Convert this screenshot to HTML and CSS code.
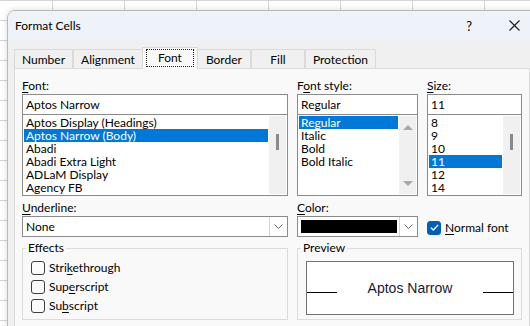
FILE: index.html
```html
<!DOCTYPE html>
<html lang="en">
<head>
    <link rel="stylesheet" href="styles.css">
</head>
<body>
    <div class="sheet">
        <div class="dialog">
            <div class="titlebar">
                <span class="title">Format Cells</span>
                <span class="help">?</span>
                <svg class="close" width="11" height="11" viewBox="0 0 11 11">
                    <path d="M0.5 0.5 L10.5 10.5 M10.5 0.5 L0.5 10.5" stroke="#1a1a1a" stroke-width="1.1" fill="none"/>
                </svg>
            </div>

            <div class="dialog-body">
                <div class="tabs">
                    <div class="tab">Number</div>
                    <div class="tab">Alignment</div>
                    <div class="tab active"><span class="focus">Font</span></div>
                    <div class="tab">Border</div>
                    <div class="tab">Fill</div>
                    <div class="tab">Protection</div>
                </div>

                <div class="page">
                    <div class="form-grid">
                        <!-- row 1 -->
                        <div class="field">
                            <div class="label"><u>F</u>ont:</div>
                            <div class="textbox">Aptos Narrow</div>
                            <div class="listbox">
                                <div class="items">
                                    <div class="item">Aptos Display (Headings)</div>
                                    <div class="item selected">Aptos Narrow (Body)</div>
                                    <div class="item">Abadi</div>
                                    <div class="item">Abadi Extra Light</div>
                                    <div class="item">ADLaM Display</div>
                                    <div class="item">Agency FB</div>
                                </div>
                                <div class="scrollbar"><div class="thumb"></div></div>
                            </div>
                        </div>

                        <div class="field">
                            <div class="label">F<u>o</u>nt style:</div>
                            <div class="textbox">Regular</div>
                            <div class="listbox">
                                <div class="items">
                                    <div class="item selected">Regular</div>
                                    <div class="item">Italic</div>
                                    <div class="item">Bold</div>
                                    <div class="item">Bold Italic</div>
                                </div>
                                <div class="scrollbar arrows">
                                    <span class="arrow up"></span>
                                    <span class="arrow down"></span>
                                </div>
                            </div>
                        </div>

                        <div class="field">
                            <div class="label"><u>S</u>ize:</div>
                            <div class="textbox">11</div>
                            <div class="listbox">
                                <div class="items">
                                    <div class="item">8</div>
                                    <div class="item">9</div>
                                    <div class="item">10</div>
                                    <div class="item selected">11</div>
                                    <div class="item">12</div>
                                    <div class="item">14</div>
                                </div>
                                <div class="scrollbar"><div class="thumb"></div></div>
                            </div>
                        </div>

                        <!-- row 2 -->
                        <div class="field">
                            <div class="label"><u>U</u>nderline:</div>
                            <div class="combo">
                                <span class="combo-value">None</span>
                                <span class="drop">
                                    <svg width="9" height="5" viewBox="0 0 9 5"><path d="M0.5 0.5 L4.5 4.5 L8.5 0.5" stroke="#6b6b6b" fill="none"/></svg>
                                </span>
                            </div>
                        </div>

                        <div class="field">
                            <div class="label"><u>C</u>olor:</div>
                            <div class="combo">
                                <span class="swatch"></span>
                                <span class="drop">
                                    <svg width="9" height="5" viewBox="0 0 9 5"><path d="M0.5 0.5 L4.5 4.5 L8.5 0.5" stroke="#6b6b6b" fill="none"/></svg>
                                </span>
                            </div>
                        </div>

                        <div class="field normal-font">
                            <label class="check">
                                <span class="box checked">
                                    <svg width="9" height="7" viewBox="0 0 9 7"><path d="M0.8 3.6 L3.3 6 L8.2 0.9" stroke="#fff" stroke-width="1.3" fill="none"/></svg>
                                </span>
                                <span><u>N</u>ormal font</span>
                            </label>
                        </div>

                        <!-- row 3 -->
                        <fieldset class="group">
                            <legend>Effects</legend>
                            <label class="check row"><span class="box"></span><span>Stri<u>k</u>ethrough</span></label>
                            <label class="check row"><span class="box"></span><span>Sup<u>e</u>rscript</span></label>
                            <label class="check row"><span class="box"></span><span>Su<u>b</u>script</span></label>
                        </fieldset>

                        <fieldset class="group preview-group">
                            <legend>Preview</legend>
                            <div class="preview">
                                <span class="rule"></span>
                                <span class="sample">Aptos Narrow</span>
                                <span class="rule"></span>
                            </div>
                        </fieldset>
                    </div>
                </div>
            </div>
        </div>
    </div>
</body>
</html>
```

FILE: styles.css
```css
body {
    margin: 0;
    width: 530px;
    height: 326px;
    overflow: hidden;
    font-family: Lato, 'Liberation Sans', Arial, sans-serif;
    font-size: 12px;
    color: #000;
    background-color: #fff;
    background-image:
        linear-gradient(to right, #d6d6d6 1px, transparent 1px),
        linear-gradient(to bottom, #d6d6d6 1px, transparent 1px);
    background-size: 72px 20px;
    background-position: 52px 0, 0 0;
}

u {
    text-decoration-thickness: 1px;
    text-underline-offset: 2px;
}

.sheet {
    padding: 10px 0 0 7px;
}

.dialog {
    width: 530px;
    height: 330px;
    background: #f0f0f0;
    border: 1px solid #b9b9b9;
    border-radius: 8px 0 0 0;
    overflow: hidden;
    box-shadow: 0 0 6px rgba(0, 0, 0, 0.15);
}

/* Title bar */
.titlebar {
    display: flex;
    align-items: center;
    height: 29px;
    padding: 0 18px 0 7px;
    background: #eef2f9;
}

.title {
    flex: 1;
}

.help {
    margin-right: 37px;
    font-size: 13px;
}

/* Body + tabs */
.dialog-body {
    padding: 7px 8px 0 6px;
}

.tabs {
    display: flex;
    align-items: flex-end;
    height: 21px;
}

.tab {
    box-sizing: border-box;
    min-width: 54px;
    height: 19px;
    padding: 2px 7px 0;
    text-align: center;
    line-height: 15px;
    border: 1px solid #dadada;
    border-bottom: none;
    background: #f0f0f0;
}

.tab.active {
    position: relative;
    z-index: 1;
    height: 22px;
    padding: 1px 3px 0;
    margin: 0 -1px -1px -1px;
    background: #f9f9f9;
}

.tab.active .focus {
    display: block;
    padding: 1px 11px;
    line-height: 14px;
    border: 1px dotted #222;
}

.page {
    height: 300px;
    background: #f9f9f9;
    border: 1px solid #dadada;
    padding: 9px 7px 0 7px;
}

/* Form layout */
.form-grid {
    display: grid;
    grid-template-columns: 266px 121px 95px;
    column-gap: 9px;
    row-gap: 4px;
}

.label {
    height: 16px;
    line-height: 16px;
}

.textbox,
.combo {
    box-sizing: border-box;
    height: 21px;
    line-height: 19px;
    padding-left: 3px;
    background: #fff;
    border: 1px solid #8b8b8b;
}

.listbox {
    box-sizing: border-box;
    display: flex;
    height: 82px;
    margin-top: -1px;
    padding: 1px;
    background: #fff;
    border: 1px solid #8b8b8b;
}

.items {
    flex: 1;
}

.item {
    height: 13px;
    line-height: 13px;
    padding-left: 2px;
    margin-right: 1px;
}

.item.selected {
    background: #0078d7;
    color: #fff;
}

.scrollbar {
    width: 17px;
    background: #f0f0f0;
    display: flex;
    justify-content: center;
}

.thumb {
    width: 3px;
    height: 16px;
    margin-top: 18px;
    background: #8a8a8a;
}

.scrollbar.arrows {
    flex-direction: column;
    align-items: center;
    justify-content: space-between;
    padding: 9px 0 8px;
}

.arrow {
    width: 0;
    height: 0;
    border-left: 5px solid transparent;
    border-right: 5px solid transparent;
}

.arrow.up {
    border-bottom: 5px solid #a8a8a8;
}

.arrow.down {
    border-top: 5px solid #a8a8a8;
}

/* Combo boxes */
.combo {
    display: flex;
    align-items: stretch;
    padding: 0;
}

.combo-value {
    flex: 1;
    padding-left: 3px;
}

.swatch {
    flex: 1;
    margin: 3px 2px 3px 3px;
    background: #000;
}

.drop {
    width: 17px;
    display: flex;
    align-items: center;
    justify-content: center;
    border-left: 1px solid #d5d5d5;
    background: #fff;
}

/* Check boxes */
.normal-font {
    padding-top: 20px;
}

.check {
    display: flex;
    align-items: center;
    gap: 4px;
}

.box {
    box-sizing: border-box;
    width: 14px;
    height: 14px;
    border: 1px solid #3d3d3d;
    border-radius: 3px;
    background: #fbfbfb;
    display: flex;
    align-items: center;
    justify-content: center;
}

.box.checked {
    background: #005fb8;
    border-color: #005fb8;
}

/* Group boxes */
.group {
    box-sizing: border-box;
    margin: 0;
    min-width: 0;
    height: 79px;
    padding: 3px 8px 0;
    border: 1px solid #dcdcdc;
}

.group legend {
    padding: 0 2px;
    margin-left: -5px;
    line-height: 14px;
}

.check.row {
    height: 19px;
}

.preview-group {
    grid-column: 2 / 4;
    padding: 2px 7px 0 8px;
}

.preview {
    box-sizing: border-box;
    height: 54px;
    margin-top: 4px;
    padding-top: 18px;
    background: #fff;
    border: 1px solid #727272;
    display: flex;
    align-items: baseline;
    justify-content: space-between;
}

.rule {
    display: inline-block;
    width: 30px;
    border-top: 1px solid #000;
}

.sample {
    font-family: 'Liberation Sans', Arial, sans-serif;
    font-size: 14px;
    line-height: 16px;
    color: #1b1b2e;
}
```
